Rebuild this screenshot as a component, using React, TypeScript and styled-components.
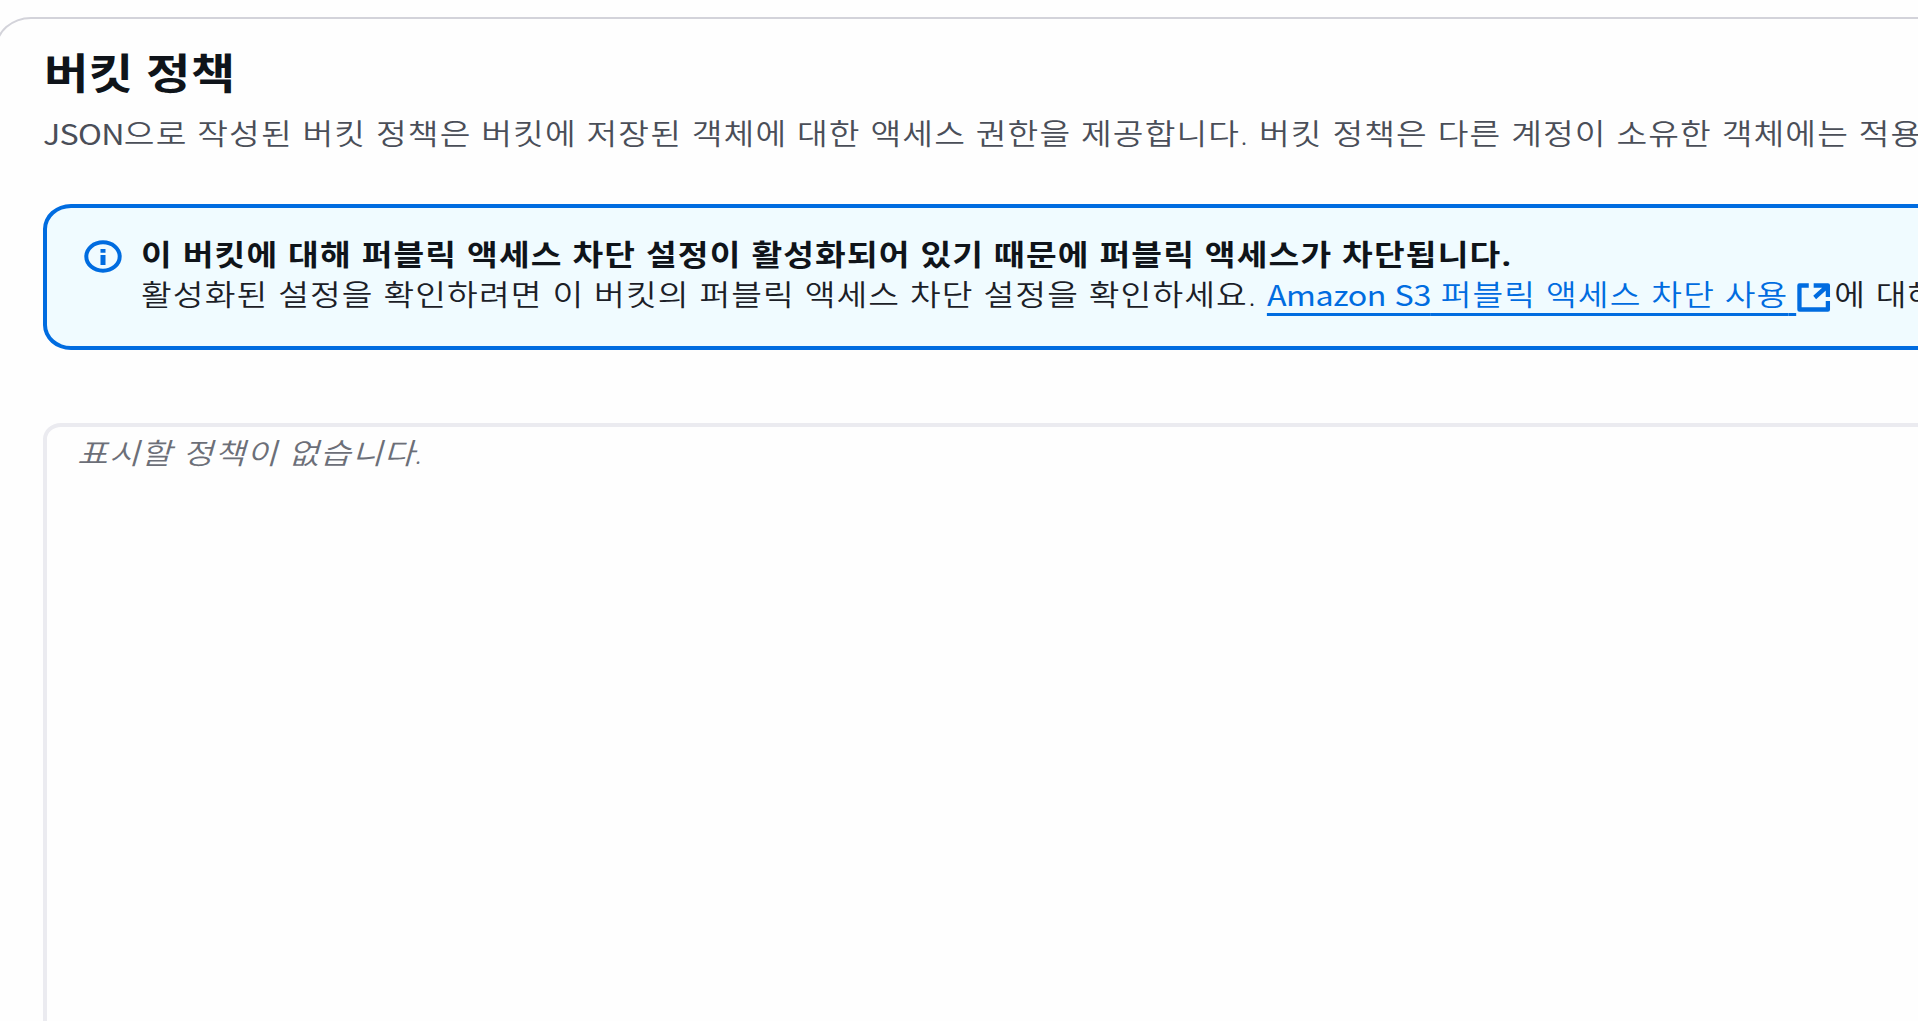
import React from 'react';
import styled, { createGlobalStyle } from 'styled-components';

const GlobalStyle = createGlobalStyle`
  html,
  body {
    margin: 0;
    background: #fefefe;
    overflow: hidden;
  }

  * {
    box-sizing: border-box;
  }
`;

const Page = styled.div`
  width: 100vw;
  height: 100vh;
  padding-top: 17px;
  overflow: hidden;
  font-family: 'Open Sans', 'Noto Sans CJK KR', sans-serif;
  font-size: 29px;
  color: #0f141a;
`;

const Card = styled.section`
  width: calc(100% + 60px);
  height: 1100px;
  margin-left: -5px;
  padding: 28px 0 0 46px;
  border: 2px solid #d3d3da;
  border-radius: 36px 0 0 0 / 32px 0 0 0;
`;

// Text is set slightly wide across the whole console
const Line = styled.div<{ $spacing?: number }>`
  width: max-content;
  white-space: nowrap;
  letter-spacing: ${({ $spacing = 1.02 }) => $spacing}px;
  transform: scaleX(1.15);
  transform-origin: 0 0;
`;

const Title = styled(Line).attrs({ as: 'h2' })`
  margin: 0 0 0 1px;
  font-size: 42px;
  line-height: 52px;
  font-weight: 700;
`;

const Description = styled(Line)`
  margin-top: 15px;
  line-height: 40px;
  font-weight: 350;
  color: #4a4e58;
`;

const Notice = styled.div`
  display: flex;
  height: 146px;
  margin-top: 50px;
  padding: 27px 0 0 37px;
  border: 4px solid #006ce0;
  border-radius: 28px 0 0 28px / 25px 0 0 25px;
  background: #f0fbff;
`;

const InfoIcon = styled.svg`
  flex: none;
  width: 38px;
  height: 33px;
  margin: 5px 19px 0 0;
`;

const NoticeTitle = styled(Line)`
  line-height: 40px;
  font-weight: 700;
`;

const NoticeText = styled(Line)`
  line-height: 40px;
  font-weight: 350;
  color: #1b2027;
`;

const Link = styled.a`
  color: #006ce0;
  text-decoration: underline;
  text-decoration-thickness: 2.5px;
  text-underline-offset: 7px;
`;

const LinkGap = styled.span`
  letter-spacing: -0.8px;
`;

const ExternalIcon = styled.svg`
  width: 29px;
  height: 29px;
  margin: 0 3px 0 1px;
  vertical-align: -6px;
`;

const Latin = styled.span<{ $spacing?: number }>`
  font-family: 'Noto Sans CJK KR', sans-serif;
  font-size: 28px;
  line-height: 1;
  font-weight: 400;
  letter-spacing: ${({ $spacing = -0.36 }) => $spacing}px;
`;

const PolicyBox = styled.div`
  height: 700px;
  margin-top: 73px;
  padding: 6px 0 0 30px;
  border: 4px solid #ebebf0;
  border-radius: 18px 0 0 0 / 16px 0 0 0;
`;

const EmptyText = styled(Line)`
  line-height: 40px;
  font-weight: 350;
  font-style: italic;
  color: #6c6f78;
`;

export default function App() {
  return (
    <Page lang="ko">
      <GlobalStyle />
      <Card>
        <Title $spacing={0.2}>버킷 정책</Title>
        <Description $spacing={0.99}>
          <Latin $spacing={-0.6}>JSON</Latin>으로 작성된 버킷 정책은 버킷에 저장된 객체에 대한
          액세스 권한을 제공합니다. 버킷 정책은 다른 계정이 소유한 객체에는 적용
        </Description>
        <Notice>
          <InfoIcon viewBox="0 0 38 33" fill="none">
            <ellipse cx="19" cy="16.5" rx="16.7" ry="14.2" stroke="#006ce0" strokeWidth="4" />
            <path d="M16.5 9h5v3.7h-5zM16.5 15h5v10h-5z" fill="#006ce0" />
          </InfoIcon>
          <div>
            <NoticeTitle>
              이 버킷에 대해 퍼블릭 액세스 차단 설정이 활성화되어 있기 때문에 퍼블릭 액세스가
              차단됩니다.
            </NoticeTitle>
            <NoticeText $spacing={1}>
              활성화된 설정을 확인하려면 이 버킷의 퍼블릭 액세스 차단 설정을 확인하세요.{' '}
              <Link>
                <Latin>Amazon S3</Latin> 퍼블릭 액세스 차단 사용
                <LinkGap> </LinkGap>
              </Link>
              <ExternalIcon
                viewBox="0 0 34 29"
                preserveAspectRatio="none"
                fill="none"
                stroke="#006ce0"
                strokeWidth="4.4"
                strokeLinejoin="round"
              >
                <path d="M12 2.5H2.5V26.5H31.5V18" />
                <path d="M17 2.5H31.5V14M30.5 3.5L18 14.5" />
              </ExternalIcon>
              에 대해
            </NoticeText>
          </div>
        </Notice>
        <PolicyBox>
          <EmptyText $spacing={1.06}>표시할 정책이 없습니다.</EmptyText>
        </PolicyBox>
      </Card>
    </Page>
  );
}
